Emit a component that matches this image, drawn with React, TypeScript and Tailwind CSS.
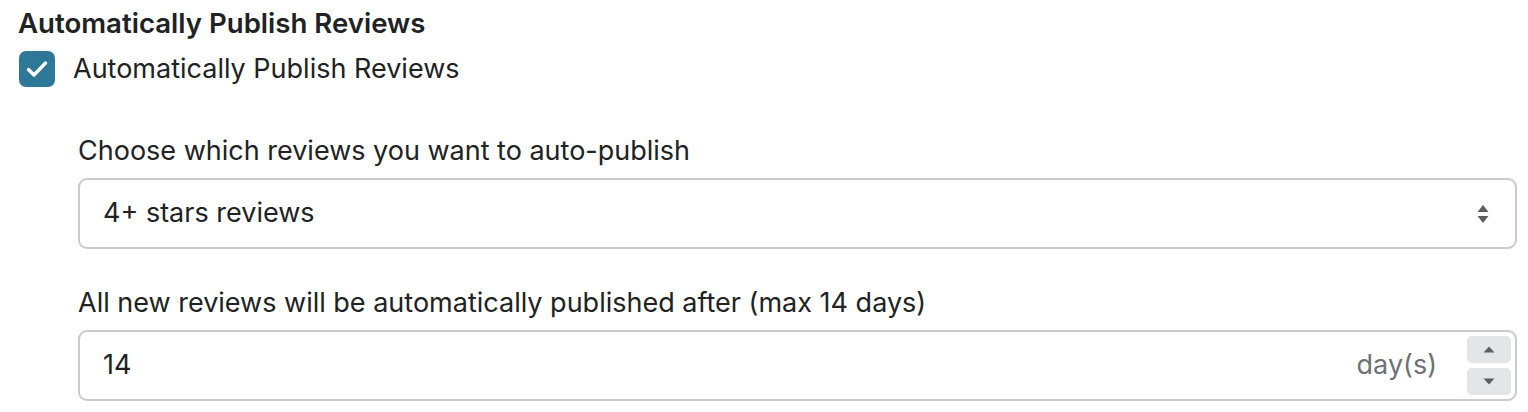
import { useState } from "react";

export default function App() {
  const [checked, setChecked] = useState(true);

  return (
    <div className="min-h-[412px] w-[1528px] bg-white pl-[18px] pr-[11px] pt-[6px] font-['Inter',sans-serif] text-[#202223]">
      <h2 className="text-[27.6px] font-semibold leading-[34px]">Automatically Publish Reviews</h2>

      {/* Checkbox */}
      <label className="mt-[11px] flex items-center gap-[18px]">
        <button
          type="button"
          onClick={() => setChecked(!checked)}
          className="ml-[1px] flex h-[36px] w-[36px] items-center justify-center rounded-[7px] bg-[#2e7897]"
        >
          {checked && (
            <svg width="22" height="18" viewBox="0 0 22 18" fill="none">
              <path d="M2.5 9.5l5.5 5.5L19.5 3" stroke="white" strokeWidth="3.4" strokeLinecap="round" strokeLinejoin="round" />
            </svg>
          )}
        </button>
        <span className="text-[27px] leading-[36px]">Automatically Publish Reviews</span>
      </label>

      <div className="ml-[60px] mt-[48px] flex flex-col">
        {/* Select */}
        <span className="text-[27px] leading-[32px]">Choose which reviews you want to auto-publish</span>
        <div className="mt-[11px] flex h-[71px] items-center justify-between rounded-[9px] border-2 border-[#c9cccf] pl-[23px] pr-[26px]">
          <span className="text-[27px]">4+ stars reviews</span>
          <svg width="12" height="20" viewBox="0 0 12 20">
            <path d="M6 1L11.5 8H0.5Z" fill="#5c5f62" />
            <path d="M6 19L11.5 12H0.5Z" fill="#5c5f62" />
          </svg>
        </div>

        {/* Number input */}
        <span className="mt-[38px] text-[27px] leading-[32px]">All new reviews will be automatically published after (max 14 days)</span>
        <div className="mt-[11px] flex h-[71px] items-center rounded-[9px] border-2 border-[#c9cccf] pl-[23px] pr-[4px]">
          <span className="flex-1 text-[27px]">14</span>
          <span className="mr-[30px] text-[27px] text-[#6d7175]">day(s)</span>
          <div className="flex flex-col gap-[5px]">
            <div className="flex h-[27px] w-[44px] items-center justify-center rounded-[5px] bg-[#e4e5e7]">
              <svg width="12" height="7" viewBox="0 0 12 7">
                <path d="M6 0.5L11.5 6.5H0.5Z" fill="#5c5f62" />
              </svg>
            </div>
            <div className="flex h-[27px] w-[44px] items-center justify-center rounded-[5px] bg-[#e4e5e7]">
              <svg width="12" height="7" viewBox="0 0 12 7">
                <path d="M6 6.5L11.5 0.5H0.5Z" fill="#5c5f62" />
              </svg>
            </div>
          </div>
        </div>
      </div>
    </div>
  );
}
